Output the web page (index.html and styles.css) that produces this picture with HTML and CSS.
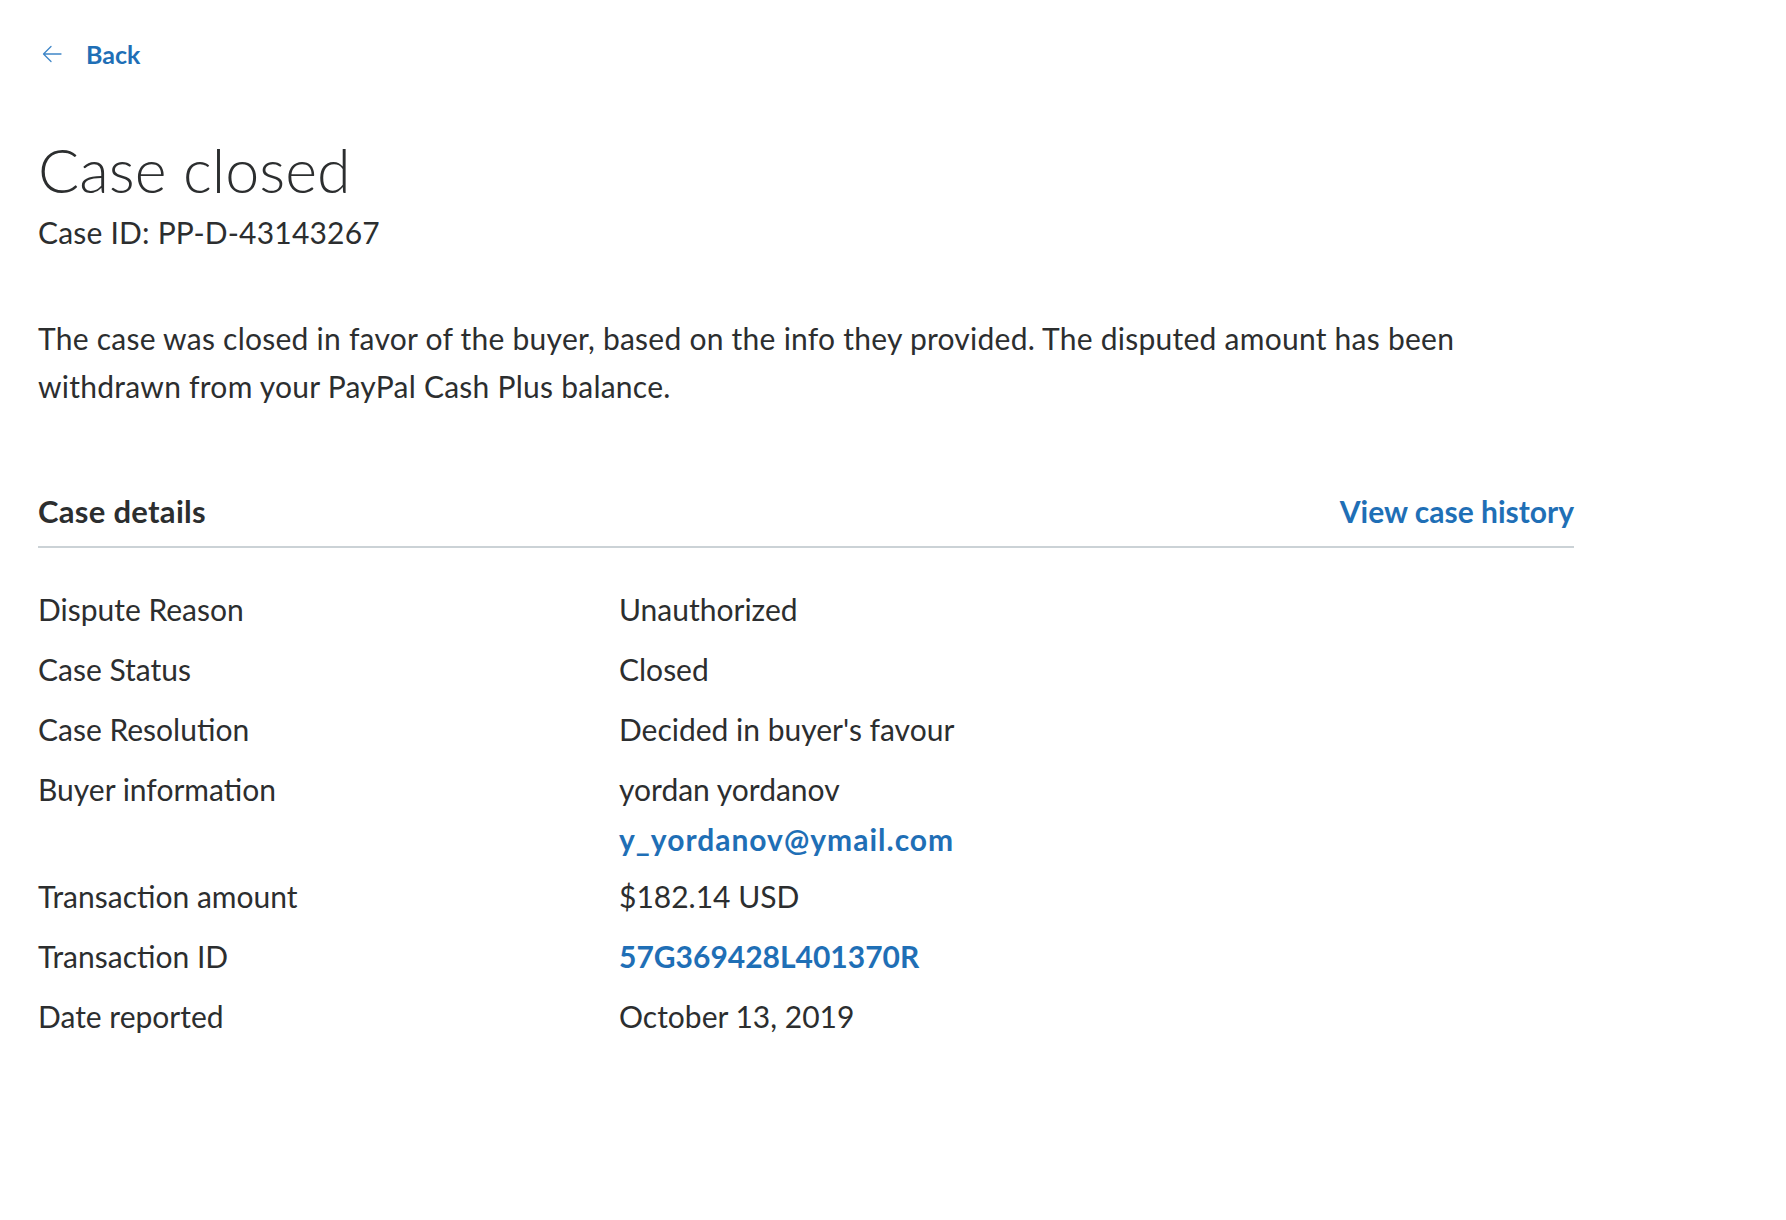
FILE: index.html
```html
<!DOCTYPE html>
<html lang="en">
<head>
    <meta charset="UTF-8">
    <meta name="viewport" content="width=device-width, initial-scale=1.0">
    <title>Case closed</title>
    <link rel="stylesheet" href="styles.css">
</head>
<body>
    <div class="page">
        <a class="back-link" href="#">
            <svg class="back-icon" viewBox="0 0 20 18" width="20" height="18" aria-hidden="true">
                <path d="M19 9H2M9 1.5L1.5 9L9 16.5" fill="none" stroke="currentColor" stroke-width="1.3" stroke-linecap="round" stroke-linejoin="round"/>
            </svg>
            <span>Back</span>
        </a>

        <h1 class="case-title">Case closed</h1>
        <div class="case-id">Case ID: PP-D-43143267</div>

        <p class="case-message">The case was closed in favor of the buyer, based on the info they provided. The disputed amount has been withdrawn from your PayPal Cash Plus balance.</p>

        <div class="details-header">
            <h2>Case details</h2>
            <a class="link" href="#">View case history</a>
        </div>

        <div class="details-list">
            <div class="detail-row">
                <div class="detail-label">Dispute Reason</div>
                <div class="detail-value">Unauthorized</div>
            </div>
            <div class="detail-row">
                <div class="detail-label">Case Status</div>
                <div class="detail-value">Closed</div>
            </div>
            <div class="detail-row">
                <div class="detail-label">Case Resolution</div>
                <div class="detail-value">Decided in buyer's favour</div>
            </div>
            <div class="detail-row">
                <div class="detail-label">Buyer information</div>
                <div class="detail-value">
                    <div>yordan yordanov</div>
                    <a class="link email" href="#">y_yordanov@ymail.com</a>
                </div>
            </div>
            <div class="detail-row">
                <div class="detail-label">Transaction amount</div>
                <div class="detail-value">$182.14 USD</div>
            </div>
            <div class="detail-row">
                <div class="detail-label">Transaction ID</div>
                <div class="detail-value"><a class="link" href="#">57G369428L401370R</a></div>
            </div>
            <div class="detail-row">
                <div class="detail-label">Date reported</div>
                <div class="detail-value">October 13, 2019</div>
            </div>
        </div>
    </div>
</body>
</html>
```

FILE: styles.css
```css
body {
    margin: 0;
    background-color: #ffffff;
    color: #2c2e2f;
    font-family: Lato, "Noto Sans", Arial, sans-serif;
    font-size: 30px;
    line-height: 36px;
}

.page {
    width: 1536px;
    padding: 38px 0 80px 38px;
}

a {
    text-decoration: none;
}

.link {
    color: #1f6fb6;
    font-weight: bold;
}

.back-link {
    display: flex;
    align-items: center;
    gap: 24px;
    color: #1f6fb6;
    font-size: 25px;
    font-weight: bold;
    line-height: 32px;
    width: max-content;
}

.back-icon {
    color: #3f86c8;
    margin-left: 4px;
}

.case-title {
    margin: 63px 0 0;
    font-size: 61px;
    font-weight: 300;
    line-height: 74px;
}

.case-id {
    margin-top: 7px;
    letter-spacing: 0.2px;
}

.case-message {
    margin: 64px 0 0;
    line-height: 48px;
    letter-spacing: 0.25px;
    max-width: 1480px;
}

.details-header {
    display: flex;
    justify-content: space-between;
    align-items: center;
    margin-top: 83px;
    padding-bottom: 17px;
    border-bottom: 2px solid #cbd2d6;
}

.details-header h2 {
    margin: 0;
    font-size: 31px;
    font-weight: bold;
    letter-spacing: 0.3px;
}

.details-list {
    margin-top: 31px;
}

.detail-row {
    display: grid;
    grid-template-columns: 581px 1fr;
    padding: 12px 0;
}

.email {
    display: block;
    margin-top: 14px;
    margin-bottom: -3px;
    letter-spacing: 1px;
}
```
